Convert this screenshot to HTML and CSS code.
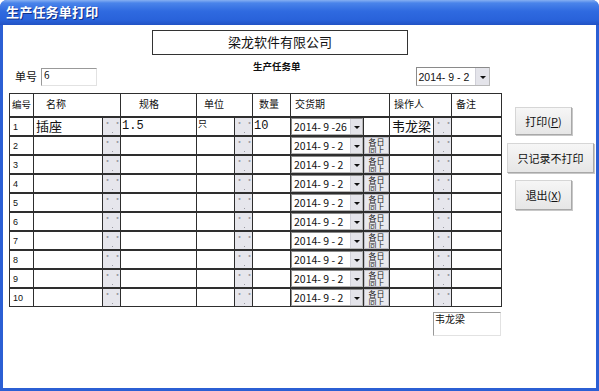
FILE: index.html
```html
<!DOCTYPE html>
<html lang="zh-CN">
<head>
  <meta charset="UTF-8" />
  <title>生产任务单打印</title>
  <link rel="stylesheet" href="styles.css">
</head>
<body>
  <div class="window">
    <div class="titlebar">生产任务单打印</div>
    <div class="client">
      <div class="company">梁龙软件有限公司</div>

      <div class="topline">
        <span class="lbl">单号</span>
        <div class="field billno">6</div>
        <div class="subtitle">生产任务单</div>
        <div class="combo top-date"><span>2014- 9 - 2</span><i class="arrow"></i></div>
      </div>

      <div class="main">
        <div class="grid">
          <div class="c h h-no">编号</div>
          <div class="c h span2 h-name">名称</div>
          <div class="c h h-spec">规格</div>
          <div class="c h span2 h-unit">单位</div>
          <div class="c h h-qty">数量</div>
          <div class="c h span2">交货期</div>
          <div class="c h span2">操作人</div>
          <div class="c h">备注</div>

          <div class="c num">1</div><div class="c big">插座</div><div class="c dot">··</div><div class="c mono">1.5</div><div class="c small">只</div><div class="c dot">··</div><div class="c mono">10</div><div class="c date"><div class="combo"><span>2014- 9 -26</span><i class="arrow"></i></div></div><div class="c"></div><div class="c big">韦龙梁</div><div class="c dot">··</div><div class="c"></div>

          <div class="c num">2</div><div class="c"></div><div class="c dot">··</div><div class="c"></div><div class="c"></div><div class="c dot">··</div><div class="c"></div><div class="c date"><div class="combo"><span>2014- 9 - 2</span><i class="arrow"></i></div></div><div class="c same">各日<br><u>同上</u></div><div class="c"></div><div class="c dot">··</div><div class="c"></div>

          <div class="c num">3</div><div class="c"></div><div class="c dot">··</div><div class="c"></div><div class="c"></div><div class="c dot">··</div><div class="c"></div><div class="c date"><div class="combo"><span>2014- 9 - 2</span><i class="arrow"></i></div></div><div class="c same">各日<br><u>同上</u></div><div class="c"></div><div class="c dot">··</div><div class="c"></div>

          <div class="c num">4</div><div class="c"></div><div class="c dot">··</div><div class="c"></div><div class="c"></div><div class="c dot">··</div><div class="c"></div><div class="c date"><div class="combo"><span>2014- 9 - 2</span><i class="arrow"></i></div></div><div class="c same">各日<br><u>同上</u></div><div class="c"></div><div class="c dot">··</div><div class="c"></div>

          <div class="c num">5</div><div class="c"></div><div class="c dot">··</div><div class="c"></div><div class="c"></div><div class="c dot">··</div><div class="c"></div><div class="c date"><div class="combo"><span>2014- 9 - 2</span><i class="arrow"></i></div></div><div class="c same">各日<br><u>同上</u></div><div class="c"></div><div class="c dot">··</div><div class="c"></div>

          <div class="c num">6</div><div class="c"></div><div class="c dot">··</div><div class="c"></div><div class="c"></div><div class="c dot">··</div><div class="c"></div><div class="c date"><div class="combo"><span>2014- 9 - 2</span><i class="arrow"></i></div></div><div class="c same">各日<br><u>同上</u></div><div class="c"></div><div class="c dot">··</div><div class="c"></div>

          <div class="c num">7</div><div class="c"></div><div class="c dot">··</div><div class="c"></div><div class="c"></div><div class="c dot">··</div><div class="c"></div><div class="c date"><div class="combo"><span>2014- 9 - 2</span><i class="arrow"></i></div></div><div class="c same">各日<br><u>同上</u></div><div class="c"></div><div class="c dot">··</div><div class="c"></div>

          <div class="c num">8</div><div class="c"></div><div class="c dot">··</div><div class="c"></div><div class="c"></div><div class="c dot">··</div><div class="c"></div><div class="c date"><div class="combo"><span>2014- 9 - 2</span><i class="arrow"></i></div></div><div class="c same">各日<br><u>同上</u></div><div class="c"></div><div class="c dot">··</div><div class="c"></div>

          <div class="c num">9</div><div class="c"></div><div class="c dot">··</div><div class="c"></div><div class="c"></div><div class="c dot">··</div><div class="c"></div><div class="c date"><div class="combo"><span>2014- 9 - 2</span><i class="arrow"></i></div></div><div class="c same">各日<br><u>同上</u></div><div class="c"></div><div class="c dot">··</div><div class="c"></div>

          <div class="c num">10</div><div class="c"></div><div class="c dot">··</div><div class="c"></div><div class="c"></div><div class="c dot">··</div><div class="c"></div><div class="c date"><div class="combo"><span>2014- 9 - 2</span><i class="arrow"></i></div></div><div class="c same">各日<br><u>同上</u></div><div class="c"></div><div class="c dot">··</div><div class="c"></div>
        </div>

        <div class="actions">
          <button class="btn btn-print">打印(<u>P</u>)</button>
          <button class="btn btn-record">只记录不打印</button>
          <button class="btn btn-exit">退出(<u>X</u>)</button>
        </div>
      </div>

      <div class="field operator">韦龙梁</div>
    </div>
  </div>
</body>
</html>
```

FILE: styles.css
```css
body {
  margin: 0;
  padding: 0;
  background: #fff;
  font-family: "Liberation Sans", "Noto Sans CJK SC", sans-serif;
  color: #111;
}
.window {
  width: 599px;
  height: 391px;
  overflow: hidden;
  border-radius: 7px 7px 0 0;
  background: #2b5fd4;
}
.titlebar {
  height: 25px;
  box-sizing: border-box;
  padding-left: 6px;
  line-height: 24px;
  color: #fff;
  font-family: "Noto Sans CJK SC", sans-serif;
  font-size: 13px;
  font-weight: bold;
  letter-spacing: 0.2px;
  text-shadow: 1px 1px 0 #10308a;
  background: linear-gradient(to bottom, #86b0f2 0%, #4a84ea 12%, #2f6ae0 45%, #2962da 80%, #2252c4 100%);
}
.client {
  height: 363px;
  margin: 0 3px;
  background: #fff;
  overflow: hidden;
}
.company {
  width: 254px;
  height: 23px;
  margin: 5px 0 0 149px;
  border: 1px solid #333;
  text-align: center;
  line-height: 21px;
  font-family: "Noto Sans CJK SC", sans-serif;
  font-size: 13px;
}
.topline {
  display: flex;
  align-items: flex-end;
  height: 28px;
  margin-top: 3px;
}
.lbl {
  width: 22px;
  margin: 0 0 2px 12px;
  font-family: "Noto Sans CJK SC", sans-serif;
  font-size: 11px;
}
.field {
  box-sizing: border-box;
  background: #fff;
  border: 1px solid #999;
  border-right-color: #e2e2e2;
  border-bottom-color: #e2e2e2;
  font-family: "Noto Sans CJK SC", sans-serif;
}
.billno {
  width: 56px;
  height: 18px;
  margin-left: 4px;
  padding-left: 2px;
  font-size: 10px;
  line-height: 12px;
}
.subtitle {
  align-self: flex-start;
  margin-left: 156px;
  font-family: "Noto Sans CJK SC", sans-serif;
  font-size: 9.5px;
  font-weight: bold;
  line-height: 12px;
  margin-top: 2px;
}
.combo {
  display: flex;
  align-items: center;
  box-sizing: border-box;
  height: 100%;
  background: #fff;
  border: 1px solid #b8b8b8;
  border-top-color: #8a8a8a;
  border-left-color: #8a8a8a;
  font-size: 10.5px;
  white-space: pre;
}
.combo span {
  flex: 1;
  padding-left: 2px;
}
.arrow {
  width: 11px;
  height: 100%;
  background: #e4e4ea;
  border-left: 1px solid #d0d0d8;
  position: relative;
}
.arrow::after {
  content: "";
  position: absolute;
  left: 3px;
  top: 50%;
  margin-top: -1px;
  border-left: 3px solid transparent;
  border-right: 3px solid transparent;
  border-top: 3px solid #111;
}
.top-date {
  width: 74px;
  height: 19px;
  margin: 0 0 0 115px;
}
.top-date .arrow {
  width: 13px;
}
.top-date .arrow::after {
  left: 4px;
}
.main {
  display: flex;
  margin-top: 7px;
}
.grid {
  display: grid;
  grid-template-columns: 23px 68px 17px 75px 37px 17px 37px 72px 25px 43px 17px 49px;
  grid-template-rows: 22px repeat(10, 17px);
  gap: 2px 1px;
  padding: 1px;
  margin-left: 6px;
  background: #2e2e2e;
}
.c {
  background: #fff;
  overflow: hidden;
  font-family: "Noto Sans CJK SC", sans-serif;
  font-size: 10px;
}
.h {
  padding: 3px 0 0 4px;
  line-height: 14px;
  white-space: nowrap;
}
.h-no {
  padding-left: 2px;
  font-size: 9.5px;
}
.span2 { grid-column: span 2; }
.h-name { padding-left: 12px; }
.h-spec { padding-left: 18px; }
.h-unit { padding-left: 7px; }
.h-qty { padding-left: 6px; }
.num {
  padding: 3px 0 0 3px;
  font-family: "Liberation Sans", sans-serif;
  font-size: 9px;
  line-height: 12px;
}
.big {
  padding-left: 2px;
  font-size: 13px;
  line-height: 16px;
  white-space: nowrap;
}
.mono {
  padding-left: 1px;
  font-family: "Liberation Mono", monospace;
  font-size: 12px;
  line-height: 16px;
}
.small {
  padding-left: 1px;
  font-size: 9px;
  line-height: 11px;
}
.dot {
  position: relative;
  background: #e6e6ec;
  color: #9a9aa2;
  text-align: center;
  font-size: 9px;
  line-height: 9px;
  letter-spacing: 1px;
}
.dot::after {
  content: "";
  position: absolute;
  left: 50%;
  bottom: 2px;
  width: 1px;
  height: 1px;
  background: #9a9aa2;
}
.date {
  background: #fff;
}
.same {
  background: #e9e9ee;
  border: 1px solid #bfbfc6;
  box-sizing: border-box;
  text-align: center;
  color: #222;
  font-size: 8px;
  line-height: 7.5px;
}
.actions {
  display: flex;
  flex-direction: column;
  align-items: flex-start;
  padding-left: 5px;
}
.btn {
  box-sizing: border-box;
  background: linear-gradient(to bottom, #f6f6f6, #e6e6e6);
  border: 1px solid #d6d6d6;
  border-right-color: #a8a8a8;
  border-bottom-color: #a8a8a8;
  box-shadow: 1px 1px 0 #c8c8c8;
  font-family: "Noto Sans CJK SC", sans-serif;
  font-size: 11px;
  color: #111;
  padding: 0;
}
.btn-print {
  width: 57px;
  height: 28px;
  margin: 14px 0 0 8px;
}
.btn-record {
  width: 87px;
  height: 30px;
  margin-top: 8px;
}
.btn-exit {
  width: 57px;
  height: 30px;
  margin: 7px 0 0 8px;
}
.operator {
  width: 68px;
  height: 24px;
  margin: 5px 0 0 430px;
  padding-left: 1px;
  font-size: 10px;
  line-height: 12px;
}
```
